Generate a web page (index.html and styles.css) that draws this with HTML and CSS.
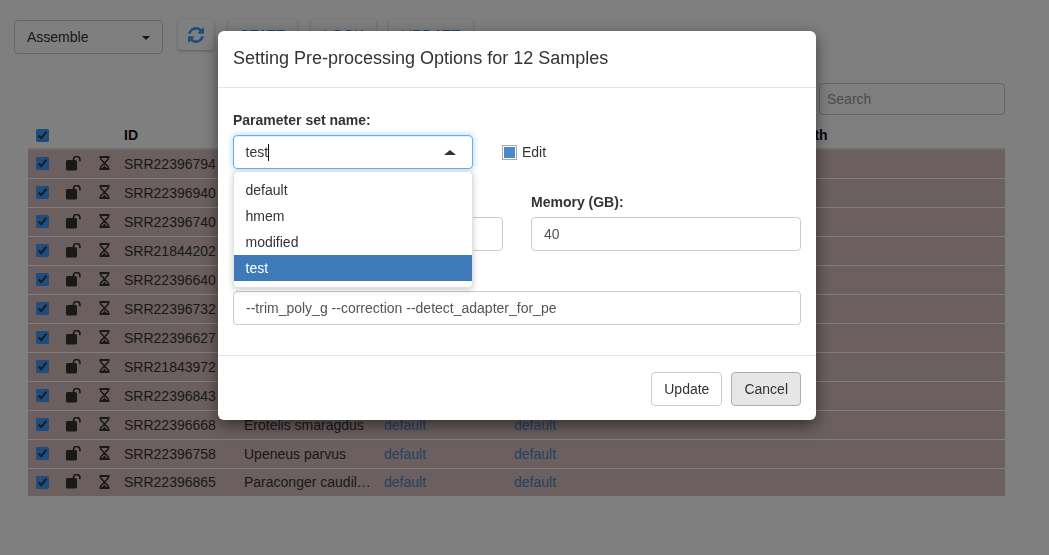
FILE: index.html
```html
<!DOCTYPE html>
<html lang="en">
<head>
  <meta charset="UTF-8" />
  <title>Samples</title>
  <link rel="stylesheet" href="styles.css">
</head>
<body>
  <svg class="icon-defs" width="0" height="0">
    <symbol id="unlock" viewBox="0 0 17 15">
      <rect x="1" y="4" width="11" height="10.500" rx="1.500" fill="currentColor" />
      <path d="M8.500 4.500V3.600a3.200 3.200 0 0 1 6.400 0v1.600" fill="none" stroke="currentColor" stroke-width="1.700" />
    </symbol>
    <symbol id="hourglass" viewBox="0 0 11 14">
      <path d="M0.500 1h10M0.500 13h10" stroke="currentColor" stroke-width="1.800" fill="none" />
      <path d="M1.700 1v2L5.500 7 1.700 11v2M9.300 1v2L5.500 7l3.800 4v2" stroke="currentColor" stroke-width="1.600" fill="none" />
      <path d="M3 12.500L5.500 9.500 8 12.500z" fill="currentColor" />
    </symbol>
  </svg>

  <!-- toolbar -->
  <div class="toolbar">
    <div class="stage-select">Assemble<span class="caret"></span></div>
    <div class="tool-buttons">
      <button class="tool-btn icon-btn">
        <svg width="16" height="16" viewBox="0 0 1536 1536"><path fill="currentColor" d="M1511 928q0 5-1 7-64 268-268 434.500t-478 166.500q-146 0-282.500-55t-243.500-157l-129 129q-19 19-45 19t-45-19-19-45v-448q0-26 19-45t45-19h448q26 0 45 19t19 45-19 45l-137 137q71 66 161 102t187 36q134 0 250-65t186-179q11-17 53-117 8-23 30-23h192q13 0 22.500 9.500t9.500 22.500zm25-800v448q0 26-19 45t-45 19h-448q-26 0-45-19t-19-45 19-45l138-138q-148-137-349-137-134 0-250 65t-186 179q-11 17-53 117-8 23-30 23h-199q-13 0-22.500-9.500t-9.500-22.500v-7q65-268 270-434.500t480-166.500q146 0 284 55.500t245 156.500l130-129q19-19 45-19t45 19 19 45z"/></svg>
      </button>
      <button class="tool-btn btn-state">STATE</button>
      <button class="tool-btn btn-lock">LOCK</button>
      <button class="tool-btn btn-update">UPDATE</button>
    </div>
  </div>

  <div class="search-row">
    <input class="search" placeholder="Search" />
  </div>

  <!-- samples table -->
  <div class="table-wrap">
    <table class="samples">
      <colgroup>
        <col class="c-check"><col class="c-lock"><col class="c-state"><col class="c-id">
        <col class="c-species"><col class="c-param"><col class="c-param2"><col>
      </colgroup>
      <thead>
        <tr>
          <th><input type="checkbox" checked /></th>
          <th></th><th></th><th>ID</th><th></th><th></th><th></th><th>Length</th>
        </tr>
      </thead>
      <tbody id="rows"></tbody>
    </table>
  </div>

  <div class="backdrop"></div>

  <!-- pre-processing dialog -->
  <div class="modal">
    <div class="modal-header">Setting Pre-processing Options for 12 Samples</div>
    <div class="modal-body">
      <label class="field-label">Parameter set name:</label>
      <div class="param-row">
        <div class="combo">
          <div class="combo-input">test<span class="text-cursor"></span><span class="caret caret-up"></span></div>
          <div class="combo-menu">
            <div class="combo-item">default</div>
            <div class="combo-item">hmem</div>
            <div class="combo-item">modified</div>
            <div class="combo-item selected">test</div>
          </div>
        </div>
        <div class="edit-toggle"><span class="edit-box"></span>Edit</div>
      </div>
      <div class="two-col">
        <div>
          <label class="field-label"></label>
          <input class="text-input" />
        </div>
        <div>
          <label class="field-label">Memory (GB):</label>
          <input class="text-input" value="40" />
        </div>
      </div>
      <label class="field-label"></label>
      <input class="text-input" value="--trim_poly_g --correction --detect_adapter_for_pe" />
    </div>
    <div class="modal-footer">
      <button class="btn">Update</button>
      <button class="btn btn-active">Cancel</button>
    </div>
  </div>

  <script>
    const samples = [
      ["SRR22396794", ""], ["SRR22396940", ""], ["SRR22396740", ""], ["SRR21844202", ""],
      ["SRR22396640", ""], ["SRR22396732", ""], ["SRR22396627", ""], ["SRR21843972", ""],
      ["SRR22396843", ""], ["SRR22396668", "Erotelis smaragdus"],
      ["SRR22396758", "Upeneus parvus"], ["SRR22396865", "Paraconger caudilimbatus"]
    ];
    const tbody = document.getElementById("rows");
    samples.forEach(([id, species]) => {
      tbody.innerHTML += `<tr>
        <td><input type="checkbox" checked /></td>
        <td><svg class="ico-unlock" width="17" height="15"><use href="#unlock" /></svg></td>
        <td><svg class="ico-hourglass" width="11" height="14"><use href="#hourglass" /></svg></td>
        <td>${id}</td>
        <td>${species}</td>
        <td><a class="param-link">default</a></td>
        <td><a class="param-link">default</a></td>
        <td></td>
      </tr>`;
    });
  </script>
</body>
</html>
```

FILE: styles.css
```css
* { box-sizing: border-box; }
body { margin: 0; background: #fff; color: #333; font-family: "Liberation Sans", Arial, sans-serif; font-size: 14px; line-height: 20px; }
.icon-defs { position: absolute; }

.toolbar { display: flex; align-items: flex-start; padding: 19px 0 0 14px; height: 50px; }
.stage-select { position: relative; width: 149px; height: 34px; margin-top: 1px; padding: 6px 12px; border: 1px solid #ccc; border-radius: 4px; }
.caret { position: absolute; right: 12px; top: 15px; border: 4px solid transparent; border-top-color: #333; border-bottom: 0; }
.caret-up { right: 16px; top: 14px; border: 5px solid transparent; border-bottom-color: #333; border-top: 0; border-left-width: 6px; border-right-width: 6px; }
.tool-buttons { display: flex; margin-left: 15px; }
.tool-btn { height: 31px; margin-right: 14px; padding: 0; border: 0; border-radius: 3px; background: #fff; color: #3b8ee8; font: 15px "Liberation Sans", Arial, sans-serif; box-shadow: 0 1px 3px rgba(0,0,0,.3); }
.icon-btn { width: 36px; color: #3c9aff; display: flex; align-items: center; justify-content: center; }
.btn-state { width: 69px; }
.btn-lock { width: 65px; margin-right: 13px; }
.btn-update { width: 84px; }

.search-row { display: flex; justify-content: flex-end; margin-top: 33px; padding-right: 44px; }
.search { width: 186px; height: 32px; padding: 0 7px; border: 1px solid #ccc; border-radius: 4px; font: 14px "Liberation Sans", Arial, sans-serif; }
.search::placeholder { color: #999; }

.table-wrap { margin: 7px 44px 0 28px; }
.samples { width: 977px; table-layout: fixed; border-collapse: collapse; }
.c-check { width: 30px; }
.c-lock { width: 33px; }
.c-state { width: 25px; }
.c-id { width: 120px; }
.c-species { width: 140px; }
.c-param { width: 130px; }
.c-param2 { width: 267px; }
.samples th { height: 27px; padding: 0 0 0 8px; text-align: left; font-weight: bold; color: #111; border-bottom: 2px solid #ddd; }
.samples td { height: 29px; padding: 0 5px 0 8px; background: #d6bfbf; border-bottom: 1px solid #fff; white-space: nowrap; overflow: hidden; text-overflow: ellipsis; vertical-align: middle; }
.samples tr:last-child td { height: 28px; border-bottom: 0; }
.samples input { display: block; margin: 0; width: 13px; height: 13px; accent-color: #3c9aff; }
.samples svg { display: block; color: #333; }
.ico-unlock { margin-top: -1px; margin-left: -1px; }
.ico-hourglass { margin-top: -1px; }
.param-link { color: #4a86c0; }

.backdrop { position: fixed; inset: 0; background: rgba(0,0,0,.5); }

.modal { position: absolute; left: 218px; top: 31px; width: 598px; height: 389px; display: flex; flex-direction: column; background: #fff; border-radius: 6px; box-shadow: 0 5px 15px rgba(0,0,0,.5); }
.modal-header { height: 57px; padding: 15px; font-size: 18px; line-height: 25px; border-bottom: 1px solid #e5e5e5; }
.modal-body { flex: 1; padding: 22px 15px 0; }
.field-label { display: block; height: 20px; margin-bottom: 5px; font-weight: bold; }

.param-row { display: flex; align-items: center; gap: 28px; margin-bottom: 23px; }
.combo { position: relative; width: 241px; }
.combo-input { position: relative; width: 240px; height: 34px; padding: 6px 11.5px; border: 1px solid #66afe9; border-radius: 4px; box-shadow: inset 0 1px 1px rgba(0,0,0,.075), 0 0 6px rgba(102,175,233,.6); }
.text-cursor { display: inline-block; width: 1px; height: 17px; vertical-align: -4px; background: #111; }
.combo-menu { position: absolute; z-index: 2; top: 36px; left: 0; width: 240px; padding: 5px 0 6px; background: #fff; border: 1px solid #e0e0e0; border-radius: 4px; box-shadow: 0 2px 6px rgba(0,0,0,.2); }
.combo-item { height: 26px; padding: 3px 11.5px; }
.combo-item.selected { background: #3f7ab8; color: #fff; }
.edit-toggle { display: flex; align-items: center; gap: 5px; }
.edit-box { width: 15px; height: 15px; border: 1px solid #aaa; background: #4a8acb; box-shadow: inset 0 0 0 1px #fff; }

.two-col { display: grid; grid-template-columns: 270px 270px; gap: 28px; margin-bottom: 15px; }
.text-input { display: block; width: 100%; height: 34px; padding: 6px 12px; border: 1px solid #ccc; border-radius: 4px; color: #555; font: 14px "Liberation Sans", Arial, sans-serif; }

.modal-footer { display: flex; justify-content: flex-end; gap: 9px; height: 65px; padding: 16px 15px 0; border-top: 1px solid #e5e5e5; }
.btn { height: 34px; padding: 6px 12px; border: 1px solid #ccc; border-radius: 4px; background: #fff; color: #333; font: 14px "Liberation Sans", Arial, sans-serif; }
.btn-active { background: #e6e6e6; border-color: #adadad; }
```
